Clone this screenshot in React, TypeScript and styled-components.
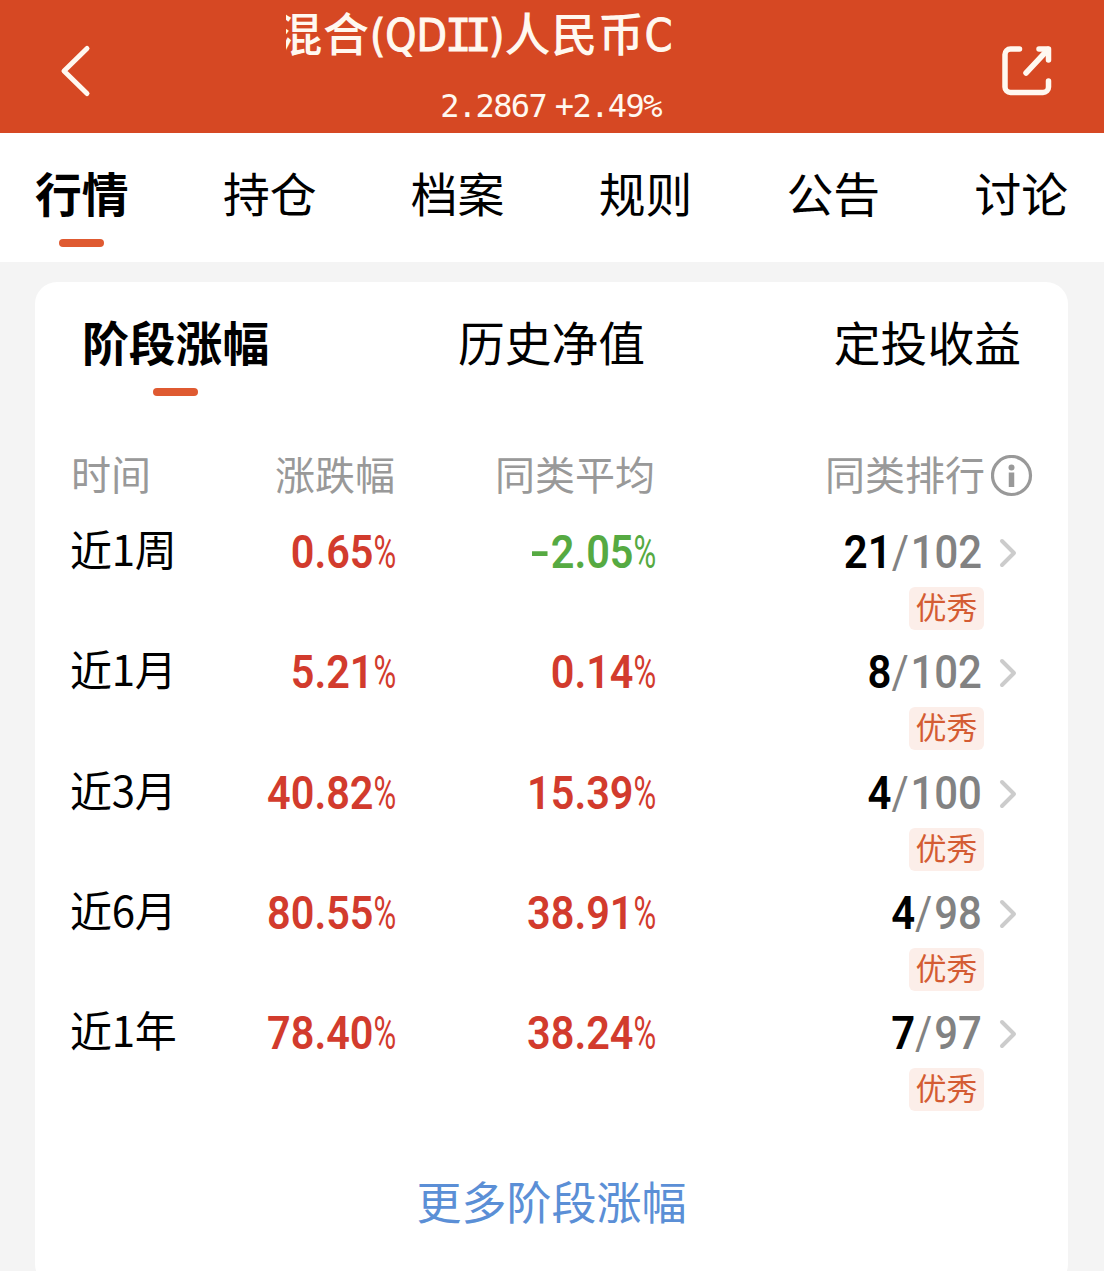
import styled, { createGlobalStyle } from 'styled-components'

interface Period {
  label: string
  change: string
  average: string
  rank: number
  total: number
}

const TABS = ['行情', '持仓', '档案', '规则', '公告', '讨论']
const SECTIONS = ['阶段涨幅', '历史净值', '定投收益']

const PERIODS: Period[] = [
  { label: '近1周', change: '0.65', average: '-2.05', rank: 21, total: 102 },
  { label: '近1月', change: '5.21', average: '0.14', rank: 8, total: 102 },
  { label: '近3月', change: '40.82', average: '15.39', rank: 4, total: 100 },
  { label: '近6月', change: '80.55', average: '38.91', rank: 4, total: 98 },
  { label: '近1年', change: '78.40', average: '38.24', rank: 7, total: 97 },
]

const BackIcon = () => (
  <svg width="32" height="54" viewBox="0 0 32 54" fill="none">
    <path d="M27 4.500 4 27l23 22.500" stroke="#fff8f0" strokeWidth="5" strokeLinecap="round" strokeLinejoin="round" />
  </svg>
)

const ShareIcon = () => (
  <svg width="52" height="52" viewBox="0 0 52 52" fill="none" stroke="#fff8f0" strokeWidth="5.500" strokeLinecap="round" strokeLinejoin="round">
    <path d="M17.500 4H8.500A5.500 5.500 0 0 0 3 9.500V42a5.500 5.500 0 0 0 5.500 5.500H41a5.500 5.500 0 0 0 5.500-5.500v-6" />
    <path d="M37 4h9.500v11" />
    <path d="M46 4.500 24 28" />
  </svg>
)

const InfoIcon = () => (
  <svg width="42" height="42" viewBox="0 0 42 42" fill="none">
    <circle cx="20.500" cy="20.500" r="19" stroke="#999" strokeWidth="3.200" />
    <circle cx="20.500" cy="12.500" r="3" fill="#999" />
    <path d="M20.500 17.500v14.500" stroke="#999" strokeWidth="5.500" />
  </svg>
)

const ChevronIcon = () => (
  <svg width="20" height="32" viewBox="0 0 20 32" fill="none">
    <path d="M4 4 16 16 4 28" stroke="#ccc" strokeWidth="4" strokeLinecap="round" strokeLinejoin="round" />
  </svg>
)

const Percentage = ({ value }: { value: string }) => {
  const isNegative = value.startsWith('-')

  return (
    <Figure $color={isNegative ? '#56aa42' : '#d23b2d'}>
      {isNegative && <Minus>-</Minus>}
      {value.replace('-', '')}
      <Percent>%</Percent>
    </Figure>
  )
}

const App = () => (
  <Page>
    <GlobalStyle />
    <Header>
      <IconButton aria-label="返回">
        <BackIcon />
      </IconButton>
      <Heading>
        <Title>
          <TitleText>
            混合<Latin>(QD<Serif>II</Serif>)</Latin>人民币<Latin>C</Latin>
          </TitleText>
        </Title>
        <Quote>2.2867 +2.49%</Quote>
      </Heading>
      <IconButton aria-label="分享">
        <ShareIcon />
      </IconButton>
    </Header>

    <Tabs>
      {TABS.map((tab, i) => (
        <Tab key={tab} $active={i === 0}>{tab}</Tab>
      ))}
    </Tabs>

    <Card>
      <Sections>
        {SECTIONS.map((section, i) => (
          <Tab key={section} $active={i === 0}>{section}</Tab>
        ))}
      </Sections>

      <TableHead>
        <span>时间</span>
        <HeadCell>涨跌幅</HeadCell>
        <HeadCell>同类平均</HeadCell>
        <HeadCell>同类排行</HeadCell>
        <InfoCell>
          <InfoIcon />
        </InfoCell>
      </TableHead>

      {PERIODS.map(({ label, change, average, rank, total }) => (
        <Row key={label}>
          <Label>{label}</Label>
          <Percentage value={change} />
          <Percentage value={average} />
          <RankCell>
            <Rank>
              {rank}
              <Total><Slash>/</Slash>{total}</Total>
            </Rank>
            <Badge>优秀</Badge>
          </RankCell>
          <ChevronCell>
            <ChevronIcon />
          </ChevronCell>
        </Row>
      ))}

      <MoreLink>更多阶段涨幅</MoreLink>
    </Card>
  </Page>
)

export default App

const GlobalStyle = createGlobalStyle`
  * {
    box-sizing: border-box;
  }

  body {
    margin: 0;
    background: #f4f4f4;
  }
`

const Page = styled.div`
  width: 1104px;
  height: 1271px;
  overflow: hidden;
  background: #f4f4f4;
  color: #000;
  font-family: 'Noto Sans CJK SC', sans-serif;
`

const Header = styled.header`
  display: flex;
  justify-content: space-between;
  height: 133px;
  padding: 0 50px 0 60px;
  background: #d64823;
  color: #fff8f0;
`

const IconButton = styled.button`
  display: flex;
  align-items: center;
  width: 54px;
  height: 142px;
  padding: 0;
  border: 0;
  background: none;

  &:last-child {
    justify-content: flex-end;
  }
`

const Heading = styled.div`
  display: flex;
  flex-direction: column;
  align-items: center;
  width: 532px;
  margin-right: 11px;
`

const Title = styled.div`
  display: flex;
  flex-shrink: 0;
  justify-content: flex-end;
  width: 387px;
  height: 66px;
  margin-right: 145px;
  overflow: hidden;
`

const TitleText = styled.span`
  flex-shrink: 0;
  font-size: 46px;
  font-weight: 500;
  line-height: 62px;
  letter-spacing: 0.8px;
  white-space: nowrap;
`

const Latin = styled.span`
  font-family: 'DejaVu Sans Condensed', 'DejaVu Sans', sans-serif;
  font-size: 44px;
  font-weight: 400;
  font-stretch: condensed;
  letter-spacing: 0;
  line-height: 1;
  -webkit-text-stroke: 1px currentColor;
`

const Serif = styled.span`
  font-family: 'DejaVu Sans Mono', monospace;
  letter-spacing: -6.5px;
  margin: 0 4px 0 -2px;
`

const Quote = styled.div`
  flex-shrink: 0;
  margin-right: 2px;
  font-family: 'DejaVu Sans Mono', monospace;
  font-size: 32px;
  line-height: 80px;
  letter-spacing: -1.6px;
  word-spacing: -9px;
  white-space: nowrap;
`

const Tabs = styled.nav`
  display: flex;
  justify-content: space-between;
  height: 129px;
  padding: 24px 36px 0 35px;
  background: #fff;
`

const Tab = styled.div<{ $active: boolean }>`
  display: flex;
  flex-direction: column;
  align-items: center;
  font-size: 46.800px;
  font-weight: ${({ $active }) => ($active ? 700 : 400)};
  line-height: 70px;

  &::after {
    content: '';
    display: ${({ $active }) => ($active ? 'block' : 'none')};
    width: 45px;
    height: 8px;
    margin: 12px 1px 0 0;
    border-radius: 4px;
    background: #df5a31;
  }
`

const Card = styled.main`
  width: 1033px;
  height: 1004px;
  margin: 20px 0 0 35px;
  border-radius: 22px;
  background: #fff;
`

const Sections = styled.div`
  display: flex;
  justify-content: space-between;
  height: 163px;
  padding: 24px 47px 0 47px;
`

const TableHead = styled.div`
  display: grid;
  grid-template-columns: 125px 199px 260px 330px 48px;
  height: 62px;
  padding-left: 36px;
  color: #999;
  font-size: 40px;
  line-height: 56px;
`

const HeadCell = styled.span`
  text-align: right;
`

const InfoCell = styled.span`
  display: flex;
  align-items: center;
  height: 62px;
  padding-left: 6px;
`

const Row = styled.div`
  display: grid;
  grid-template-columns: 126px 200px 260px 328px 48px;
  height: 120.3px;
  padding-left: 35px;
`

const Label = styled.span`
  font-size: 42px;
  line-height: 81px;
  letter-spacing: -0.3px;
`

const Figure = styled.span<{ $color: string }>`
  color: ${({ $color }) => $color};
  font-family: Roboto, sans-serif;
  font-size: 46px;
  font-weight: 600;
  line-height: 91px;
  text-align: right;
  white-space: nowrap;
  transform: scaleX(0.9);
  transform-origin: right;
`

const Minus = styled.span`
  display: inline-block;
  transform: scaleX(1.4);
  transform-origin: right;
`

const Percent = styled.span`
  display: inline-block;
  width: 25px;
  font-weight: 400;
  text-align: left;
  transform: scaleX(0.75);
  transform-origin: left;
`

const RankCell = styled.div`
  display: flex;
  flex-direction: column;
  align-items: flex-end;
`

const Rank = styled.span`
  padding-right: 2px;
  font-family: Roboto, sans-serif;
  font-size: 46px;
  font-weight: 600;
  line-height: 91px;
  height: 80px;
  white-space: nowrap;
  transform: scaleX(0.91);
  transform-origin: right;
`

const Total = styled.span`
  color: #828282;
  font-weight: 500;
`

const Slash = styled.span`
  padding-right: 2px;
  font-weight: 400;
`

const Badge = styled.span`
  width: 75px;
  height: 43px;
  border-radius: 6px;
  background: #fceee9;
  color: #d45c33;
  font-size: 31px;
  line-height: 37px;
  text-align: center;
`

const ChevronCell = styled.span`
  display: flex;
  align-items: center;
  height: 92px;
  padding-left: 14px;
`

const MoreLink = styled.a`
  display: block;
  padding-top: 60px;
  color: #5b8fd6;
  font-size: 45px;
  line-height: 66px;
  text-align: center;
`
